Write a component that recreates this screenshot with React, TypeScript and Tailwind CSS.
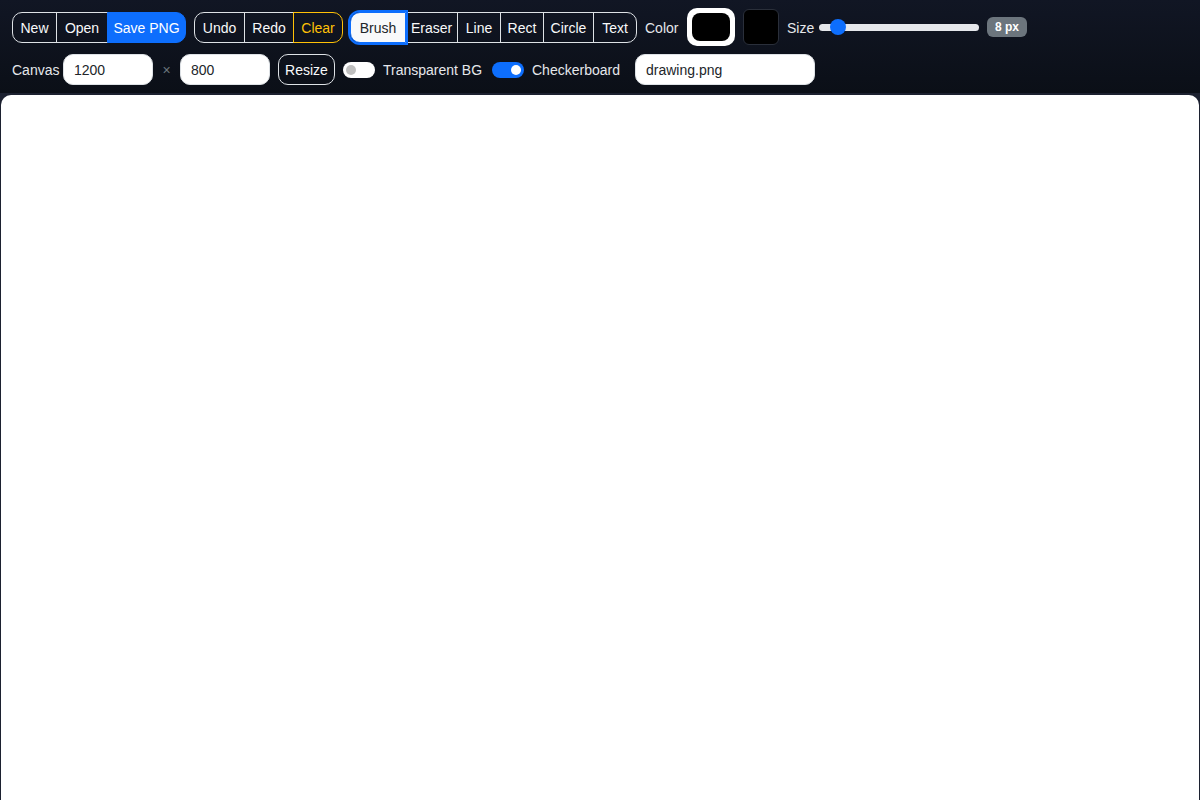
import { useState } from 'react'

const FONT = { fontFamily: '"Liberation Sans", Arial, sans-serif' }

type Btn = { label: string; w: string; kind?: 'primary' | 'warning' | 'active' }

function ButtonGroup({ items }: { items: Btn[] }) {
  return (
    <div className="flex">
      {items.map((b, i) => {
        const first = i === 0
        const last = i === items.length - 1
        let cls = 'border-[#dee2e6] text-[#f8f9fa] bg-transparent'
        if (b.kind === 'primary') cls = 'border-[#0d6efd] bg-[#0d6efd] text-white z-10'
        if (b.kind === 'warning') cls = 'border-[#ffc107] text-[#ffc107] z-10'
        if (b.kind === 'active')
          cls = 'border-[#0d6efd] bg-[#f8f9fa] text-[#212529] z-20 outline-2 outline-[#0d6efd]'
        return (
          <button
            key={b.label}
            type="button"
            className={`relative h-[31px] whitespace-nowrap border pt-[2px] text-center text-[14px] leading-[21px] ${b.w} ${cls} ${
              first ? 'rounded-l-[10px]' : '-ml-px'
            } ${last ? 'rounded-r-[10px]' : ''}`}
          >
            {b.label}
          </button>
        )
      })}
    </div>
  )
}

function Toggle({ on }: { on: boolean }) {
  return (
    <span
      className={`flex h-4 w-8 items-center rounded-full px-[3px] ${
        on ? 'justify-end bg-[#0d6efd]' : 'justify-start bg-white'
      }`}
    >
      <span className={`h-[10px] w-[10px] rounded-full ${on ? 'bg-white' : 'bg-[#bfbfbf]'}`} />
    </span>
  )
}

const toolWidths: Record<string, string> = {
  Brush: 'w-[56px]',
  Eraser: 'w-[53px]',
  Line: 'w-[44px]',
  Rect: 'w-[44px]',
  Circle: 'w-[51px]',
  Text: 'w-[44px]',
}

export default function App() {
  const [size] = useState(8)
  const [tool] = useState('Brush')

  const tools: Btn[] = ['Brush', 'Eraser', 'Line', 'Rect', 'Circle', 'Text'].map((t) => ({
    label: t,
    w: toolWidths[t],
    kind: t === tool ? 'active' : undefined,
  }))

  const inputCls =
    'h-[31px] rounded-[10px] border border-[#dee2e6] bg-white px-[10px] pt-px text-[14px] text-[#212529] outline-none'

  return (
    <div className="flex h-[800px] w-[1200px] flex-col overflow-hidden bg-[#1c2130]" style={FONT}>
      <header className="flex flex-col gap-2 border-b border-[#1c2130] bg-gradient-to-b from-[#111624] to-[#0b0f17] px-3 pb-2 pt-2">
        <div className="flex h-[38px] items-center gap-2">
          <ButtonGroup
            items={[
              { label: 'New', w: 'w-[45px]' },
              { label: 'Open', w: 'w-[52px]' },
              { label: 'Save PNG', w: 'w-[79px]', kind: 'primary' },
            ]}
          />
          <ButtonGroup
            items={[
              { label: 'Undo', w: 'w-[51px]' },
              { label: 'Redo', w: 'w-[50px]' },
              { label: 'Clear', w: 'w-[50px]', kind: 'warning' },
            ]}
          />
          <div className="ml-[-1px]">
            <ButtonGroup items={tools} />
          </div>
          <span className="w-[34px] whitespace-nowrap pt-[2px] text-[14px] text-[#e5e7eb]">Color</span>
          <span className="flex h-[38px] w-[48px] items-center justify-center rounded-[10px] bg-white p-[5px]">
            <span className="h-full w-full rounded-[8px] bg-black" />
          </span>
          <span className="h-[36px] w-[36px] rounded-[6px] border border-[#2a2f3a] bg-black" />
          <span className="w-[24px] whitespace-nowrap pt-[2px] text-[14px] text-[#e5e7eb]">Size</span>
          <div className="relative flex h-4 w-[160px] items-center">
            <div className="h-[7px] w-full rounded-full bg-[#e5e7eb]" />
            <div
              className="absolute top-0 h-4 w-4 rounded-full bg-[#0d6efd]"
              style={{ left: `${((size - 1) / 63) * 144 + 5 - 10}px` }}
            />
          </div>
          <span className="flex h-5 w-10 items-center justify-center rounded-[6px] bg-[#6c757d] text-[12px] font-bold text-white">
            {size} px
          </span>
        </div>
        <div className="flex h-[31px] items-center gap-2">
          <span className="w-[43px] whitespace-nowrap pt-[2px] text-[14px] text-[#e5e7eb]">Canvas</span>
          <input readOnly value="1200" className={`w-[90px] ${inputCls}`} />
          <span className="w-[11px] pt-[2px] text-center text-[14px] text-[#6c757d]">×</span>
          <input readOnly value="800" className={`w-[90px] ${inputCls}`} />
          <button
            type="button"
            className="h-[31px] w-[57px] rounded-[10px] border border-[#dee2e6] pt-[2px] text-[14px] text-[#f8f9fa]"
          >
            Resize
          </button>
          <label className="flex items-center gap-2">
            <Toggle on={false} />
            <span className="w-[101px] whitespace-nowrap pt-[2px] text-[14px] text-[#e5e7eb]">Transparent BG</span>
          </label>
          <label className="flex items-center gap-2">
            <Toggle on={true} />
            <span className="w-[95px] whitespace-nowrap pt-[2px] text-[14px] text-[#e5e7eb]">Checkerboard</span>
          </label>
          <input readOnly value="drawing.png" className={`w-[180px] ${inputCls}`} />
        </div>
      </header>
      <main className="flex-1 px-px pt-px">
        <div className="h-full w-full rounded-t-[10px] bg-white" />
      </main>
    </div>
  )
}
